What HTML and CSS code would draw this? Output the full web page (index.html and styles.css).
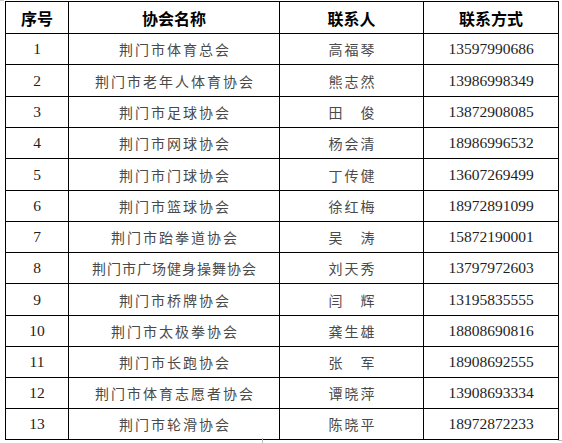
FILE: index.html
```html
<!DOCTYPE html>
<html lang="zh-CN">
<head>
<meta charset="utf-8">
<title>荆门市体育协会联系方式</title>
<link rel="stylesheet" href="styles.css">
</head>
<body>
<div class="page">
  <div class="table">
    <div class="row head">
      <div class="cell">序号</div>
      <div class="cell">协会名称</div>
      <div class="cell">联系人</div>
      <div class="cell">联系方式</div>
    </div>
    <div class="row r31"><div class="cell num">1</div><div class="cell cn">荆门市体育总会</div><div class="cell cn">高福琴</div><div class="cell num">13597990686</div></div>
    <div class="row r32"><div class="cell num">2</div><div class="cell cn">荆门市老年人体育协会</div><div class="cell cn">熊志然</div><div class="cell num">13986998349</div></div>
    <div class="row r31"><div class="cell num">3</div><div class="cell cn">荆门市足球协会</div><div class="cell cn">田　俊</div><div class="cell num">13872908085</div></div>
    <div class="row r31"><div class="cell num">4</div><div class="cell cn">荆门市网球协会</div><div class="cell cn">杨会清</div><div class="cell num">18986996532</div></div>
    <div class="row r32"><div class="cell num">5</div><div class="cell cn">荆门市门球协会</div><div class="cell cn">丁传健</div><div class="cell num">13607269499</div></div>
    <div class="row r31"><div class="cell num">6</div><div class="cell cn">荆门市篮球协会</div><div class="cell cn">徐红梅</div><div class="cell num">18972891099</div></div>
    <div class="row r31"><div class="cell num">7</div><div class="cell cn">荆门市跆拳道协会</div><div class="cell cn">吴　涛</div><div class="cell num">15872190001</div></div>
    <div class="row r31"><div class="cell num">8</div><div class="cell cn tight">荆门市广场健身操舞协会</div><div class="cell cn">刘天秀</div><div class="cell num">13797972603</div></div>
    <div class="row r32"><div class="cell num">9</div><div class="cell cn">荆门市桥牌协会</div><div class="cell cn">闫　辉</div><div class="cell num">13195835555</div></div>
    <div class="row r31"><div class="cell num">10</div><div class="cell cn">荆门市太极拳协会</div><div class="cell cn">龚生雄</div><div class="cell num">18808690816</div></div>
    <div class="row r31"><div class="cell num">11</div><div class="cell cn">荆门市长跑协会</div><div class="cell cn">张　军</div><div class="cell num">18908692555</div></div>
    <div class="row r31"><div class="cell num">12</div><div class="cell cn">荆门市体育志愿者协会</div><div class="cell cn">谭晓萍</div><div class="cell num">13908693334</div></div>
    <div class="row r31"><div class="cell num">13</div><div class="cell cn">荆门市轮滑协会</div><div class="cell cn">陈晓平</div><div class="cell num">18972872233</div></div>
  </div>
  <span class="mark mark-a"></span>
  <span class="mark mark-b"></span>
  <span class="mark mark-c"></span>
</div>
</body>
</html>
```
FILE: styles.css
```css
html, body {
  margin: 0;
  padding: 0;
  background: #ffffff;
}

.page {
  position: relative;
  width: 562px;
  height: 443px;
  overflow: hidden;
}

.table {
  margin: 1px 0 0 5px;
  width: 554px;
  border-top: 1px solid #000;
  border-left: 1px solid #000;
  box-sizing: border-box;
}

.row {
  display: grid;
  grid-template-columns: 63px 211px 144px 135px;
  height: 31px;
}

.row.head { height: 32px; }
.row.r32 { height: 32px; }

.cell {
  box-sizing: border-box;
  border-right: 1px solid #000;
  border-bottom: 1px solid #000;
  display: flex;
  align-items: center;
  justify-content: center;
  white-space: nowrap;
}

.head .cell {
  font-family: "Noto Sans CJK SC", sans-serif;
  font-weight: 700;
  font-size: 16px;
  color: #000;
}

.cn {
  font-family: "Noto Sans CJK SC", sans-serif;
  font-size: 14px;
  letter-spacing: 2px;
  padding-left: 2px;
  color: #4a4a4a;
}

.cn.tight {
  letter-spacing: 1px;
  padding-left: 1px;
}

.num {
  font-family: "Liberation Serif", "Times New Roman", serif;
  font-size: 15.5px;
  color: #1e1e1e;
}

.mark {
  position: absolute;
  background: #b8b8b8;
}

.mark-a {
  left: 262px;
  top: 438px;
  width: 1px;
  height: 5px;
}

.mark-b {
  left: 558px;
  top: 440px;
  width: 4px;
  height: 1px;
}

.mark-c {
  left: 0;
  top: 0;
  width: 4px;
  height: 1px;
  background: #d0d0d0;
}
```
